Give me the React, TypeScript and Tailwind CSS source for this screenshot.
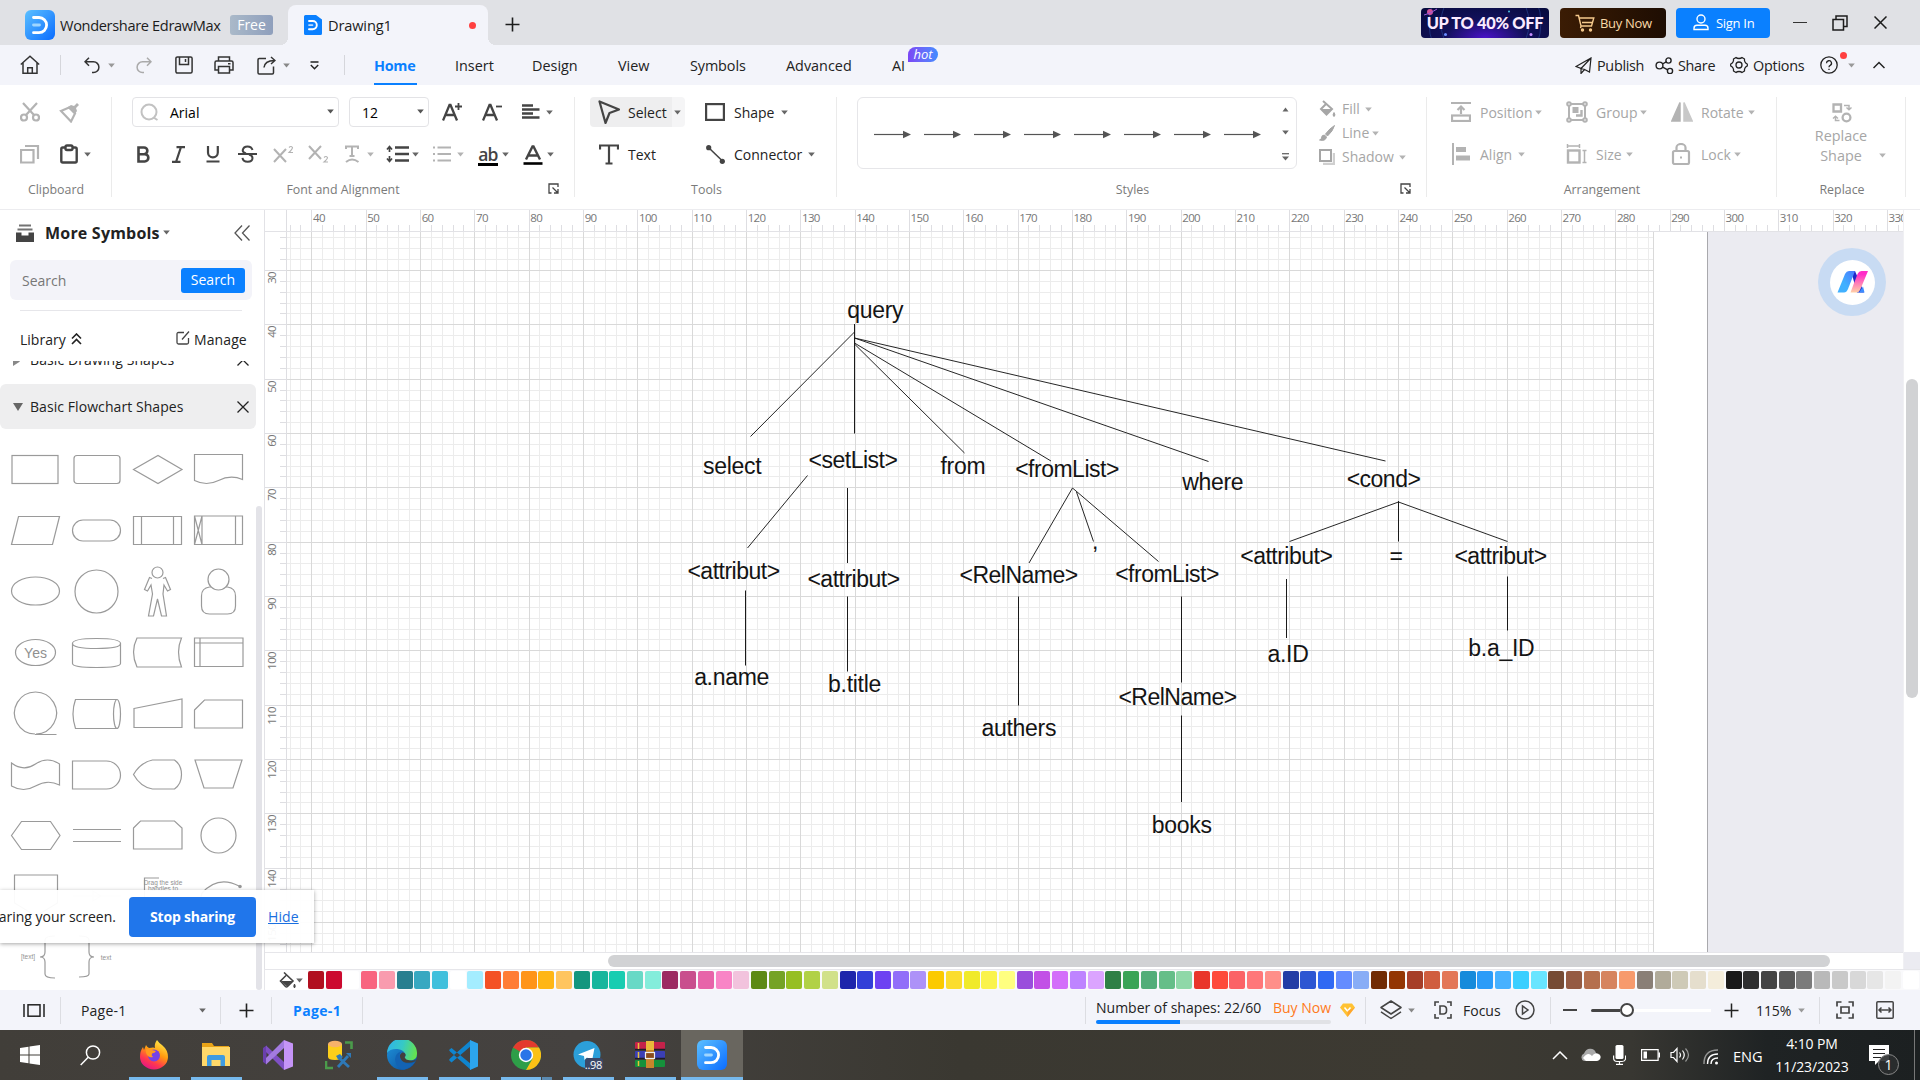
import React from "react";

type P = { children?: React.ReactNode; className?: string };
type IconProps = P & { w?: number; h?: number; sw?: number };

function Svg({ w = 20, h = 20, className = "", children, sw = 1.5 }: IconProps) {
  return (
    <svg
      width={w}
      height={h}
      viewBox={`0 0 ${w} ${h}`}
      fill="none"
      stroke="currentColor"
      strokeWidth={sw}
      className={`block shrink-0 ${className}`}
    >
      {children}
    </svg>
  );
}

function Caret({ className = "text-[#666]" }: { className?: string }) {
  return (
    <svg width="7" height="5" viewBox="0 0 7 5" className={`block shrink-0 ${className}`}>
      <path d="M0.2 0.5h6.6L3.5 4.6z" fill="currentColor" />
    </svg>
  );
}

function Cell({ className = "", children }: P) {
  return <div className={`flex h-full shrink-0 items-center whitespace-nowrap ${className}`}>{children}</div>;
}

function EdrawLogo({ size = 30, id }: { size?: number; id: string }) {
  return (
    <svg width={size} height={size} viewBox="0 0 30 30" className="block shrink-0">
      <defs>
        <linearGradient id={id} x1="0" y1="0" x2="1" y2="1">
          <stop offset="0" stopColor="#5cc0ff" />
          <stop offset="1" stopColor="#0a6cff" />
        </linearGradient>
      </defs>
      <rect width="30" height="30" rx="6" fill={`url(#${id})`} />
      <path d="M8.5 7.5H14a7.6 7.6 0 0 1 0 15.2H8.5" fill="none" stroke="#fff" strokeWidth="2.8" strokeLinecap="round" strokeLinejoin="round" />
      <path d="M8.5 15h6" stroke="#9fd6ff" strokeWidth="2.8" strokeLinecap="round" />
    </svg>
  );
}

function TitleBar() {
  return (
    <div className="flex h-[45px] bg-[#e0e1e5] text-[14px] text-[#1c1c1c]">
      <Cell className="w-[60px] pt-[5px] pl-[25px]">
        <EdrawLogo id="lg1" />
      </Cell>
      <Cell className="w-[170px] pt-[6px] text-[14.6px] tracking-[-0.35px]">Wondershare EdrawMax</Cell>
      <Cell className="w-[58px] pt-[5px]">
        <div className="flex h-5 w-[43px] items-center justify-center rounded-[3px] bg-gradient-to-r from-[#aab9c9] to-[#8f9fbc] text-[14px] text-white">Free</div>
      </Cell>
      <div className="relative mt-[5px] flex h-10 w-[200px] rounded-t-lg bg-[#f3f4fa]">
        <div className="absolute bottom-0 -left-2 h-2 w-2 bg-[radial-gradient(circle_at_0_0,transparent_8px,#f3f4fa_8px)]" />
        <div className="absolute -right-2 bottom-0 h-2 w-2 bg-[radial-gradient(circle_at_100%_0,transparent_8px,#f3f4fa_8px)]" />
        <Cell className="w-10 pl-4">
          <svg width="18" height="20" viewBox="0 0 18 20">
            <path d="M1.5 0H12l6 4.5V18.5a1.5 1.5 0 0 1-1.5 1.5h-15A1.5 1.5 0 0 1 0 18.5v-17A1.5 1.5 0 0 1 1.5 0z" fill="#0a80ff" />
            <path d="M5 6h3.7a4 4 0 0 1 0 8.2H5" fill="none" stroke="#fff" strokeWidth="1.9" strokeLinecap="round" />
            <path d="M5 10.1h3.5" stroke="#bcdcff" strokeWidth="1.7" strokeLinecap="round" />
          </svg>
        </Cell>
        <Cell className="w-[141px] pt-px text-[14.6px] tracking-[-0.15px]">Drawing1</Cell>
        <Cell>
          <div className="h-[7px] w-[7px] rounded-full bg-[#ff4040]" />
        </Cell>
      </div>
      <Cell className="w-[933px] pt-1 pl-[17px]">
        <Svg w={15} h={15} sw={1.6}>
          <path d="M7.5 0.5v14M0.5 7.5h14" />
        </Svg>
      </Cell>
      <Cell className="w-[139px]">
        <div className="relative flex h-[30px] w-[128px] items-center justify-center overflow-hidden rounded bg-[radial-gradient(ellipse_at_50%_100%,#4a12c8_0%,#12105a_45%,#060a3c_100%)] font-['Lato'] text-[16.4px] font-black tracking-[-0.3px] text-[#fbeaff]">
          <svg width="128" height="30" viewBox="0 0 128 30" className="absolute inset-0" fill="none" stroke="#2a4a9a" strokeWidth="0.6">
            <circle cx="64" cy="15" r="44" />
            <circle cx="64" cy="15" r="56" />
            <circle cx="9" cy="4" r="3" fill="#d0529a" stroke="none" />
            <path d="M3 7q6-1 13-6" stroke="#9a5bd8" strokeWidth="1" />
            <circle cx="24.5" cy="26.5" r="1.5" fill="#6a8cff" stroke="none" />
            <circle cx="110" cy="26.5" r="1.5" fill="#c58cff" stroke="none" />
            <circle cx="88" cy="3.5" r="1" fill="#4ac0e0" stroke="none" />
          </svg>
          <span className="relative pt-0.5">UP TO 40% OFF</span>
        </div>
      </Cell>
      <Cell className="w-[116px]">
        <div className="flex h-[30px] w-[106px] items-center rounded bg-gradient-to-r from-[#3b1c04] to-[#1e0d02] pl-[15px] text-[13px] text-[#f9d9a8]">
          <Svg w={20} h={18} sw={1.4} className="text-[#f5c98c]">
            <path d="M0.5 1.5h3l2.5 10.5h10.5l2.3-8H4.5M6 12l-0.5 2.2M7 8.5h10.5" />
            <circle cx="7.5" cy="16" r="1" fill="currentColor" />
            <circle cx="15.5" cy="16" r="1" fill="currentColor" />
          </Svg>
          <span className="ml-[5px] pt-0.5 tracking-[-0.3px]">Buy Now</span>
        </div>
      </Cell>
      <Cell className="w-[118px]">
        <div className="flex h-[30px] w-[94px] items-center rounded bg-[#0a80ff] pl-[17px] text-[13px] text-white">
          <Svg w={16} h={17} sw={1.4}>
            <circle cx="8" cy="5" r="4" />
            <path d="M1 15.5v-1.3q0-3 3-3h8q3 0 3 3v1.3z" />
          </Svg>
          <span className="ml-[7px] pt-0.5 tracking-[-0.3px]">Sign In</span>
        </div>
      </Cell>
      <Cell className="w-[38px]">
        <div className="-ml-px h-[1.5px] w-[14px] bg-[#333]" />
      </Cell>
      <Cell className="w-[42px]">
        <Svg w={16} h={16} sw={1.5}>
          <path d="M1 4.5h10.5V15H1zM4 4.5V1h11v10.5h-3.5" />
        </Svg>
      </Cell>
      <Cell>
        <Svg w={13} h={13} sw={1.5} className="-ml-[0.5px]">
          <path d="M0.5 0.5l12 12M12.5 0.5l-12 12" />
        </Svg>
      </Cell>
    </div>
  );
}

function MenuBar() {
  return (
    <div className="flex h-10 bg-[#f3f4fa] text-[14.4px] text-[#222]">
      <Cell className="w-[60px] pl-5 text-[#333]">
        <Svg w={20} h={20} sw={1.5}>
          <path d="M0.8 9.5L10 1.2l9.2 8.3M3 8v10.3h14V8M7.7 18v-5.2h4.6V18" />
        </Svg>
      </Cell>
      <Cell className="w-6">
        <div className="h-5 w-px bg-[#d5d6db]" />
      </Cell>
      <Cell className="w-6 text-[#333]">
        <Svg w={16} h={17} sw={1.5}>
          <path d="M5 0.8L1 4.8l4 4M1 4.8h8.500a5.3 5.3 0 0 1 0 10.800H8" />
        </Svg>
      </Cell>
      <Cell className="w-7">
        <Caret className="text-[#999]" />
      </Cell>
      <Cell className="w-[39px] text-[#aaa]">
        <Svg w={16} h={17} sw={1.5}>
          <path d="M11 0.8l4 4-4 4M15 4.8H6.500a5.3 5.3 0 0 0 0 10.800H8" />
        </Svg>
      </Cell>
      <Cell className="w-[39px] text-[#333]">
        <Svg w={18} h={18} sw={1.5}>
          <rect x="0.9" y="0.9" width="16.2" height="16.2" rx="1.5" />
          <path d="M4.5 1v7.5h9V1M10.5 3v3" />
        </Svg>
      </Cell>
      <Cell className="w-[43px] text-[#333]">
        <Svg w={20} h={18} sw={1.5}>
          <path d="M4.5 5V1h11v4M4.5 14H1V6.5Q1 5 2.5 5h15Q19 5 19 6.5V14h-3.5" />
          <path d="M4.5 10.5h11V17h-11zM14 7.7h2.5" />
        </Svg>
      </Cell>
      <Cell className="w-[26px] text-[#333]">
        <Svg w={19} h={19} sw={1.5}>
          <path d="M9 2.5H2.2Q1 2.5 1 3.7v13.1Q1 18 2.2 18h13.1q1.2 0 1.2-1.2V10.5M7 11.5Q7.5 4.8 17.5 4.5M14 1l4 3.5-4 3.5" />
        </Svg>
      </Cell>
      <Cell className="w-[27px]">
        <Caret className="text-[#888]" />
      </Cell>
      <Cell className="w-[34px]">
        <Svg w={9} h={9} sw={1.4}>
          <path d="M0.5 1h8M0.8 4l3.7 3.7L8.2 4" />
        </Svg>
      </Cell>
      <Cell className="w-[30px]">
        <div className="h-5 w-px bg-[#d5d6db]" />
      </Cell>
      <Cell className="w-[81px]">
        <div className="flex h-full w-[43px] items-center border-b-[2px] border-[#0a80ff] pt-[3px] font-bold tracking-[-0.3px] text-[#0a80ff]">Home</div>
      </Cell>
      <Cell className="w-[77px] pt-px">Insert</Cell>
      <Cell className="w-[86px] pt-px">Design</Cell>
      <Cell className="w-[72px] pt-px">View</Cell>
      <Cell className="w-[96px] pt-px tracking-[-0.1px]">Symbols</Cell>
      <Cell className="w-[106px] pt-px">Advanced</Cell>
      <Cell className="w-4 pt-px">AI</Cell>
      <div className="mt-[2px] flex h-[15px] w-[30px] items-center justify-center rounded-lg rounded-bl-none bg-gradient-to-r from-[#7a45f5] to-[#3f8cff] pb-px text-[13px] text-white italic">hot</div>
      <Cell className="ml-[637px] w-[22px]">
        <Svg w={17} h={17} sw={1.2}>
          <path d="M1 9.5L16 1l-1.5 14-5-2.5-3.5 4v-5zM16 1L6 11.5l3.5 1" />
        </Svg>
      </Cell>
      <Cell className="w-[58px] pt-px tracking-[-0.3px]">Publish</Cell>
      <Cell className="w-[23px]">
        <Svg w={19} h={17} sw={1.4}>
          <circle cx="4.5" cy="8.5" r="3.4" />
          <circle cx="13.5" cy="3.5" r="2.6" />
          <circle cx="15" cy="14" r="2.6" />
          <path d="M7.5 7l3.7-2.2M7.7 10.2l5 2.6" />
        </Svg>
      </Cell>
      <Cell className="w-[52px] pt-px tracking-[-0.3px]">Share</Cell>
      <Cell className="w-[23px]">
        <Svg w={18} h={18} sw={1.3}>
          <path d="M6 1.5q1 1 3 1t3-1l2.5 1.5q-0.3 1.5 0.5 3t2.3 2v2q-1.5 0.5-2.3 2t-0.5 3L12 16.5q-1-1-3-1t-3 1L3.5 15q0.3-1.5-0.5-3t-2.3-2V8Q2.2 7.5 3 6t0.5-3z" strokeLinejoin="round" />
          <circle cx="9" cy="9" r="3" />
        </Svg>
      </Cell>
      <Cell className="w-[67px] pt-px tracking-[-0.25px]">Options</Cell>
      <Cell className="relative w-7">
        <Svg w={18} h={18} sw={1.3}>
          <circle cx="9" cy="9" r="8.2" />
          <path d="M6.5 7.2a2.5 2.5 0 1 1 3.7 2.2Q9 10 9 11.2M9 12.7v1.3" />
        </Svg>
        <div className="absolute top-[7px] left-[20px] h-[7px] w-[7px] rounded-full bg-[#ff4040]" />
      </Cell>
      <Cell className="w-[25px]">
        <Caret className="text-[#999]" />
      </Cell>
      <Cell>
        <Svg w={12} h={8} sw={1.5}>
          <path d="M0.5 7L6 1.5 11.5 7" />
        </Svg>
      </Cell>
    </div>
  );
}

function Launcher({ className = "" }: { className?: string }) {
  return (
    <Svg w={11} h={11} sw={1.3} className={`text-[#444] ${className}`}>
      <path d="M3.5 10H1V1h9v3M4.5 4.5l5 5M10 6v4H6" />
    </Svg>
  );
}

function GroupLabel({ children, className = "" }: P) {
  return <div className={`flex h-[28px] items-start justify-center pt-[13px] text-[12.4px] leading-[16px] whitespace-nowrap text-[#7a7a7a] ${className}`}>{children}</div>;
}

function Group({ children, className = "" }: P) {
  return <div className={`h-[100px] shrink-0 border-r border-[#ebebeb] ${className}`}>{children}</div>;
}

const row = "flex h-[30px] items-center";

function Ribbon() {
  return (
    <div className="flex h-[125px] border-b border-[#ececef] bg-white pt-3 text-[14px] text-[#222]">
      <Group className="w-[112px]">
        <div className={`${row} pl-5`}>
          <Cell className="w-[39px] text-[#b3b3b3]">
            <Svg w={20} h={20} sw={2.2}>
              <circle cx="4" cy="15.5" r="3" />
              <circle cx="16" cy="15.5" r="3" />
              <path d="M3 1l11 12M17 1L6 13" />
            </Svg>
          </Cell>
          <Svg w={21} h={21} sw={2.2} className="text-[#b3b3b3]">
            <path d="M2 9l8-3.5 6 6-4 8z" />
            <path d="M9 5l3-2 3 1 3-3 2 2-3 3 1 3-2 3z" fill="currentColor" stroke="none" />
          </Svg>
        </div>
        <div className={`${row} mt-3 pl-5`}>
          <Cell className="w-10 text-[#b3b3b3]">
            <Svg w={20} h={20} sw={2.2}>
              <path d="M1 6h12.5v12.5H1zM5 2h13v13" />
            </Svg>
          </Cell>
          <Cell className="w-6 text-[#444]">
            <Svg w={18} h={20} sw={2.4}>
              <rect x="1.3" y="3.5" width="15.4" height="15" rx="1.5" />
              <rect x="5.5" y="1.5" width="7" height="4.5" rx="1.5" fill="#fff" />
            </Svg>
          </Cell>
          <Caret />
        </div>
        <GroupLabel>
          <span className="ml-px">Clipboard</span>
        </GroupLabel>
      </Group>

      <Group className="w-[463px]">
        <div className={`${row} pl-5`}>
          <div className="flex h-[30px] w-[207px] items-center rounded border border-[#e3e3e6] pl-[7px]">
            <Svg w={19} h={19} sw={2} className="text-[#c2c2c2]">
              <circle cx="9" cy="9" r="7.5" />
              <path d="M13.5 14.5l4 2.5" />
            </Svg>
            <span className="ml-[11px] w-[157px] pt-px text-black">Arial</span>
            <Caret className="mb-0.5 text-[#555]" />
          </div>
          <div className="ml-[10px] flex h-[30px] w-20 items-center rounded border border-[#e3e3e6] pl-[12px]">
            <span className="w-[55px] pt-px text-black">12</span>
            <Caret className="mb-0.5 text-[#555]" />
          </div>
          <Cell className="ml-[13px] w-10 text-[#444]">
            <Svg w={20} h={20} sw={2.3}>
              <path d="M1 18.5L7.5 3h1L15 18.5M3.5 13h9" />
              <path d="M13 4.5h7M16.5 1v7" strokeWidth="1.8" />
            </Svg>
          </Cell>
          <Cell className="w-10 text-[#444]">
            <Svg w={20} h={20} sw={2.3}>
              <path d="M1 18.5L7.5 3h1L15 18.5M3.5 13h9" />
              <path d="M14 4.5h6" strokeWidth="1.8" />
            </Svg>
          </Cell>
          <Cell className="w-6 pb-0.5 text-[#444]">
            <Svg w={18} h={15} sw={2.4}>
              <path d="M0 1.5h11M0 5.5h17.5M0 9.5h11M0 13.5h17.5" />
            </Svg>
          </Cell>
          <Caret />
        </div>
        <div className={`${row} mt-3 pl-[25px]`}>
          <Cell className="w-[35px] text-[#444]">
            <Svg w={13} h={17} sw={2.6}>
              <path d="M1.5 1.5h5.5a3.3 3.3 0 0 1 0 6.7H1.5zM1.5 8.2h6.2a3.6 3.6 0 0 1 0 7.3H1.5z" />
            </Svg>
          </Cell>
          <Cell className="w-[34px] text-[#444]">
            <Svg w={13} h={17} sw={2.2}>
              <path d="M4.5 1.2H13M0 15.8h8.5M9 1L4 16" />
            </Svg>
          </Cell>
          <Cell className="w-8 text-[#444]">
            <Svg w={14} h={18} sw={2.2}>
              <path d="M2 1v6.5a4.8 4.8 0 0 0 9.8 0V1M0.5 16.5h13" />
            </Svg>
          </Cell>
          <Cell className="w-[35px] text-[#444]">
            <Svg w={19} h={18} sw={2}>
              <path d="M14.5 5Q13.5 1.5 9.5 1.5T4.7 5.2Q4.7 7.5 8 8.5M0 9h19M11 9.5q3.5 1 3.5 3.5 0 3.7-4.8 3.7T4.5 12.8" />
            </Svg>
          </Cell>
          <Cell className="w-[35px] text-[#b3b3b3]">
            <Svg w={21} h={18} sw={2}>
              <path d="M1 4l12 13M13 4L1 17" />
              <path d="M16 2.5q2-2 3.5 0 0 1.5-3.5 5H20" strokeWidth="1.1" />
            </Svg>
          </Cell>
          <Cell className="w-[37px] text-[#b3b3b3]">
            <Svg w={21} h={18} sw={2}>
              <path d="M1 1l12 13M13 1L1 14" />
              <path d="M16 12.5q2-2 3.5 0 0 1.5-3.5 4.5H20" strokeWidth="1.1" />
            </Svg>
          </Cell>
          <Cell className="w-[22px] text-[#b3b3b3]">
            <Svg w={15} h={18} sw={2}>
              <path d="M1 4V1.5h12V4M7 1.5V11M4.5 11h5M1 17q6-5 12.5 0" />
            </Svg>
          </Cell>
          <Cell className="w-[19px]">
            <Caret className="text-[#b3b3b3]" />
          </Cell>
          <Cell className="w-[26px] text-[#444]">
            <Svg w={23} h={18} sw={2.4}>
              <path d="M9 2.5h14M9 9h14M9 15.5h14" />
              <path d="M3.5 2v5M1 4.5l2.5-3 2.5 3M3.5 11v5M1 13.5l2.5 3 2.5-3" strokeWidth="1.7" />
            </Svg>
          </Cell>
          <Cell className="w-[21px]">
            <Caret />
          </Cell>
          <Cell className="w-6 text-[#b3b3b3]">
            <Svg w={18} h={16} sw={2}>
              <path d="M4.5 1.5H18M4.5 8H18M4.5 14.5H18M0 1.5h2M0 8h2M0 14.5h2" />
            </Svg>
          </Cell>
          <Cell className="w-[21px]">
            <Caret className="text-[#b3b3b3]" />
          </Cell>
          <Cell className="w-6">
            <div className="mt-1.5 h-[18px] w-5 border-b-[3px] border-black text-center text-[17.5px] leading-[13px] font-semibold tracking-[-0.8px] text-[#444]">ab</div>
          </Cell>
          <Cell className="w-[21px]">
            <Caret />
          </Cell>
          <Cell className="w-6 text-[#444]">
            <Svg w={20} h={20} sw={2.4} className="mt-0.5">
              <path d="M3 14.5L9.5 1.5h1L17 14.5M5.5 10.5h9" />
              <path d="M0.5 18.5h19" stroke="#000" strokeWidth="2.6" />
            </Svg>
          </Cell>
          <Caret />
        </div>
        <GroupLabel className="relative">
          <span>Font and Alignment</span>
          <Launcher className="absolute top-[14px] right-[15px]" />
        </GroupLabel>
      </Group>

      <Group className="w-[262px]">
        <div className={row}>
          <div className="ml-[15px] flex h-[30px] w-[95px] items-center rounded bg-[linear-gradient(90deg,#eeeeef_82px,#f5f5f6_82px)] pl-2">
            <Cell className="w-[30px] text-[#444]">
              <Svg w={22} h={24} sw={2.2}>
                <path d="M1.5 1.5l6 21.5 4-10 9.5-3.5z" strokeLinejoin="round" />
              </Svg>
            </Cell>
            <span className="w-[46px] pt-0.5">Select</span>
            <Caret />
          </div>
          <Cell className="ml-5 w-[29px] text-[#444]">
            <Svg w={20} h={18} sw={2.2}>
              <rect x="1.1" y="1.1" width="17.8" height="15.8" />
            </Svg>
          </Cell>
          <Cell className="w-[47px] pt-0.5">Shape</Cell>
          <Caret />
        </div>
        <div className={`${row} mt-3 pl-6`}>
          <Cell className="w-[29px] text-[#444]">
            <Svg w={20} h={21} sw={2.2}>
              <path d="M1 5.5V1.5h18v4M10 1.5V19.5M6.5 19.5h7" />
            </Svg>
          </Cell>
          <Cell className="w-[78px] pt-0.5">Text</Cell>
          <Cell className="w-[28px] text-[#444]">
            <Svg w={19} h={19} sw={2}>
              <path d="M3 3l13.5 13" strokeWidth="1.6" />
              <circle cx="2.7" cy="2.7" r="2.6" fill="currentColor" stroke="none" />
              <circle cx="16.3" cy="16.3" r="2.6" fill="currentColor" stroke="none" />
            </Svg>
          </Cell>
          <Cell className="w-[74px] pt-0.5">Connector</Cell>
          <Caret />
        </div>
        <GroupLabel>
          <span className="ml-0.5">Tools</span>
        </GroupLabel>
      </Group>

      <Group className="w-[590px]">
        <div className="flex h-[72px]">
          <div className="ml-5 flex h-[72px] w-[440px] items-center gap-[13px] rounded-md border border-[#e6e6e9] pl-4">
            {Array.from({ length: 8 }, (_, i) => (
              <svg key={i} width="37" height="9" viewBox="0 0 37 9" className="mt-[3px] shrink-0">
                <path d="M0 4.5h30" stroke="#555" strokeWidth="1.2" />
                <path d="M29 0.8L37 4.5 29 8.2z" fill="#555" />
              </svg>
            ))}
            <div className="flex h-full flex-col items-center justify-between pt-[9px] pb-[7px] pl-2 text-[#666]">
              <svg width="7" height="5" viewBox="0 0 7 5">
                <path d="M0.5 4.5h6L3.5 0.5z" fill="currentColor" />
              </svg>
              <Caret />
              <svg width="7" height="8" viewBox="0 0 7 8">
                <path d="M0 0.7h7" stroke="currentColor" strokeWidth="1.3" />
                <path d="M0 3.5h7L3.5 7.5z" fill="currentColor" />
              </svg>
            </div>
          </div>
          <div className="ml-[22px] flex flex-col text-[#a6a6a6]">
            <div className="flex h-6 items-center">
              <Cell className="w-[23px]">
                <Svg w={17} h={18} sw={2}>
                  <path d="M4 1l9 8-5.5 5.5L2 9l5-5" />
                  <path d="M2 9h11l-5.5 5.5z" fill="currentColor" stroke="none" />
                  <path d="M15 12.5q2 3 0 4-2-1 0-4" fill="currentColor" strokeWidth="1" />
                </Svg>
              </Cell>
              <Cell className="w-[23px]">Fill</Cell>
              <Caret className="text-[#b3b3b3]" />
            </div>
            <div className="flex h-6 items-center">
              <Cell className="w-[23px]">
                <Svg w={16} h={16} sw={1}>
                  <path d="M15.5 0.5Q11 3 6.5 9l2 2Q14 6 15.5 0.5zM5.5 10q-3 0-3 3 0 1.5-2 2 6 1.5 7-3z" fill="currentColor" />
                </Svg>
              </Cell>
              <Cell className="w-[30px]">Line</Cell>
              <Caret className="text-[#b3b3b3]" />
            </div>
            <div className="flex h-6 items-center">
              <Cell className="w-[23px]">
                <Svg w={16} h={16} sw={2}>
                  <path d="M4 15h11V4" strokeWidth="2.4" stroke="#cfcfcf" />
                  <rect x="1" y="1" width="11" height="11" fill="#fff" />
                </Svg>
              </Cell>
              <Cell className="w-[57px]">Shadow</Cell>
              <Caret className="text-[#b3b3b3]" />
            </div>
          </div>
        </div>
        <GroupLabel className="relative">
          <span className="ml-0.5">Styles</span>
          <Launcher className="absolute top-[14px] right-[15px]" />
        </GroupLabel>
      </Group>

      <Group className="w-[350px] text-[#a6a6a6]">
        <div className={`${row} pl-6`}>
          <Cell className="w-[29px] text-[#b3b3b3]">
            <Svg w={20} h={20} sw={2.2}>
              <path d="M0 1h20M10 12V5M6.5 8L10 4.5 13.5 8" />
              <rect x="1" y="13.5" width="18" height="5.5" />
            </Svg>
          </Cell>
          <Cell className="w-[55px] pt-0.5">Position</Cell>
          <Cell className="w-[31px]"><Caret className="text-[#b3b3b3]" /></Cell>
          <Cell className="w-[30px] text-[#b3b3b3]">
            <Svg w={22} h={22} sw={2}>
              <path d="M5 3h12M5 19h12M3 5v12M19 5v12" />
              <circle cx="3" cy="3" r="1.8" />
              <circle cx="19" cy="3" r="1.8" />
              <circle cx="3" cy="19" r="1.8" />
              <circle cx="19" cy="19" r="1.8" />
              <path d="M6.5 6h6v6h-6z" fill="currentColor" stroke="none" />
              <path d="M10 14.5h5.5V9" strokeWidth="2.4" />
            </Svg>
          </Cell>
          <Cell className="w-11 pt-0.5">Group</Cell>
          <Cell className="w-[31px]"><Caret className="text-[#b3b3b3]" /></Cell>
          <Cell className="w-[30px] text-[#b3b3b3]">
            <Svg w={22} h={20} sw={1.5}>
              <path d="M9 0.5V19H0.8z" fill="currentColor" />
              <path d="M13 0.5V19h8.2z" fill="#c8c8c8" stroke="#c8c8c8" />
            </Svg>
          </Cell>
          <Cell className="w-[47px] pt-0.5">Rotate</Cell>
          <Caret className="text-[#b3b3b3]" />
        </div>
        <div className={`${row} mt-3 pl-6`}>
          <Cell className="w-[29px] text-[#b3b3b3]">
            <Svg w={20} h={22} sw={2}>
              <path d="M2 0v22" />
              <path d="M5 4h10v5H5zM5 12.5h14v5H5z" fill="currentColor" stroke="none" />
            </Svg>
          </Cell>
          <Cell className="w-[38px] pt-0.5">Align</Cell>
          <Cell className="w-12"><Caret className="text-[#b3b3b3]" /></Cell>
          <Cell className="w-[30px] text-[#b3b3b3]">
            <Svg w={21} h={20} sw={2.4}>
              <rect x="2" y="6.5" width="11.5" height="12" />
              <path d="M1 2h13M1.5 0v4M13.5 0v4M18.5 6v13M16.5 6.5h4M16.5 18.5h4" strokeWidth="1.5" />
            </Svg>
          </Cell>
          <Cell className="w-[30px] pt-0.5">Size</Cell>
          <Cell className="w-[45px]"><Caret className="text-[#b3b3b3]" /></Cell>
          <Cell className="w-[30px] text-[#b3b3b3]">
            <Svg w={20} h={22} sw={2.2}>
              <rect x="2" y="8" width="16" height="13" rx="1.5" />
              <path d="M5.5 8V4.5a4.5 3.5 0 0 1 9 0V8M9 14.5h2" />
            </Svg>
          </Cell>
          <Cell className="w-[33px] pt-0.5">Lock</Cell>
          <Caret className="text-[#b3b3b3]" />
        </div>
        <GroupLabel>
          <span className="ml-px">Arrangement</span>
        </GroupLabel>
      </Group>

      <Group className="w-[129px] text-[#a6a6a6]">
        <div className="flex h-[72px] flex-col items-center pt-[6px]">
          <Svg w={20} h={20} sw={2.3} className="ml-0.5 text-[#b3b3b3]">
            <path d="M1.5 1.5h7.5v7h-7.5z" />
            <circle cx="14.5" cy="14.5" r="3.9" />
            <path d="M12 2.5h5V6M14.5 4.5l2.5 2.2 2.5-2.2M7.5 17.5H3.5V14M1 15.5l2.500-2.2 2.5 2.2" strokeWidth="1.5" />
          </Svg>
          <div className="mt-[3px] text-[14.4px] leading-5">Replace</div>
          <div className="relative text-[14.4px] leading-5">
            Shape
            <div className="absolute top-[7px] left-[59px]">
              <Caret className="text-[#b3b3b3]" />
            </div>
          </div>
        </div>
        <GroupLabel>
          <span className="ml-0.5">Replace</span>
        </GroupLabel>
      </Group>
    </div>
  );
}

const tiny = { textAnchor: "middle", fontSize: 6.5, fill: "#909090", stroke: "none", fontFamily: "Liberation Sans" } as const;

const shapes: React.ReactNode[] = [
  <rect x="7" y="16.5" width="46" height="28" />,
  <rect x="8" y="16.5" width="46" height="28" rx="3" />,
  <path d="M6.5 30.5L31 16.5l24 14-24 14z" />,
  <path d="M6.5 15.5h48v25q-12-5-24 1t-24 0z" />,
  <path d="M13.5 16.5h41l-7 28h-41z" />,
  <rect x="6.5" y="20" width="48" height="21" rx="10.5" />,
  <path d="M6.5 16.5h48v28h-48zM14.5 16.5v28M46.5 16.5v28" />,
  <path d="M6.5 16h48v28.5h-48zM14 16v28.5M47.5 16v28.5M6.5 16L14 44.5M14 16L6.5 44.5" />,
  <ellipse cx="30.5" cy="30" rx="24" ry="14" />,
  <circle cx="30.5" cy="30.5" r="21.5" />,
  <>
    <circle cx="30.5" cy="11.5" r="5.5" />
    <path d="M25 17.5l-2.5-1-5 12 3 1.5 3.5-6 1.5 9-4 22h5l4-17 4 17h5l-3.5-22 1-9 3.5 6 3-1.5-5-12-2.5 1" />
  </>,
  <>
    <circle cx="30.5" cy="18.5" r="10.5" />
    <path d="M23.5 26h-2q-8 1-8 9v10q0 8 8 8h18q8 0 8-8V35q0-8-8-9h-2" />
  </>,
  <>
    <ellipse cx="30.5" cy="30.5" rx="20" ry="13" />
    <text x="30.5" y="35.5" textAnchor="middle" fontSize="14" fill="#909090" stroke="none" fontFamily="Liberation Sans">
      Yes
    </text>
  </>,
  <path d="M6.5 21v20.5q0 4 24 4t24-4V21M6.5 21.5q0-5 24-5t24 5-24 5-24-5z" />,
  <path d="M10 16h44.5q-6 14 0 29H10q-7-15 0-29z" />,
  <path d="M6.5 16h48.5v28.5H6.5zM6.5 21H55M12 16v28.5" />,
  <path d="M30 51a21 21 0 1 1 1 0M30 51.5h21.5" />,
  <>
    <path d="M51 16.5H9.5q-5 14 0 29H51" />
    <ellipse cx="51" cy="31" rx="3.5" ry="14.5" />
  </>,
  <path d="M7 25.5l48-9.5v28.5H7z" />,
  <path d="M6.5 27l10-10h38v28h-48z" />,
  <path d="M6.5 19q12 9 24 1t24 0v21q-12-6-24 1t-24 0z" />,
  <path d="M6.5 17h34a14 14 0 0 1 0 28h-34z" />,
  <path d="M6.5 30.5q7-12 19-14.5h22q7 5 7 14.5t-7 14.5h-22q-12-2-19-14.5z" />,
  <path d="M7 16h47l-9 28H16z" />,
  <path d="M6.5 30.5l10-14h29l9.5 14-9.5 14h-29z" />,
  <path d="M7 24.5h48M7 36.5h48" />,
  <path d="M6.5 23l7-7h34l7.5 7v21h-48.5z" />,
  <circle cx="30.5" cy="30.5" r="17.5" />,
  <path d="M9.5 9h43v28L31 50 9.5 37z" />,
  <path d="M7 30h48M27 25v10l8-5z" opacity="0.4" />,
  <>
    <path d="M32 12H17.5v40" />
    <text x="36" y="19" {...tiny}>
      Drag the side
    </text>
    <text x="36" y="25" {...tiny}>
      handles to
    </text>
  </>,
  <>
    <path d="M14 27q16-18 37-7M10 50q1-14 4-23" />
    <circle cx="52" cy="20.5" r="1.2" fill="#909090" />
  </>,
  <>
    <path d="M50 9q-10 0-10 4v12q0 5-5 5 5 0 5 5v12q0 4 10 4" />
    <text x="23" y="32" {...tiny}>
      [text]
    </text>
  </>,
  <>
    <path d="M13 9q10 0 10 4v12q0 5 5 5-5 0-5 5v12q0 3-10 3" />
    <text x="40" y="33" {...tiny}>
      text
    </text>
  </>,
];

function SymbolsPanel() {
  return (
    <div className="flex h-[780px] w-[264px] shrink-0 flex-col bg-white text-[14px] text-[#222]">
      <div className="flex h-[50px] shrink-0 items-center pb-1">
        <Cell className="w-[45px] pl-4 text-[#444]">
          <svg width="18" height="19" viewBox="0 0 18 19" fill="currentColor">
            <path d="M3 0.5h12v2H3zM1.5 4.5h15v2h-15z" opacity="0.75" />
            <path d="M0 8.5h5.5v3h7v-3H18v9.5H0z" />
          </svg>
        </Cell>
        <Cell className="w-[118px] text-[16px] font-bold tracking-[0.2px] text-[#222]">More Symbols</Cell>
        <Cell className="w-[71px] pb-0.5">
          <Caret />
        </Cell>
        <Svg w={17} h={16} sw={1.3} className="text-[#555]">
          <path d="M8 0.5L1 8l7 7.5M15.5 0.5L8.5 8l7 7.5" />
        </Svg>
      </div>
      <div className="ml-[10px] flex h-10 w-[242px] shrink-0 items-center justify-between rounded-md bg-[#f3f3f9] pr-[7px] pl-3">
        <span className="pt-px text-[#777]">Search</span>
        <div className="flex h-[25px] w-16 items-center justify-center rounded-[3px] bg-[#0a80ff] text-white">Search</div>
      </div>
      <div className="mt-[10px] ml-5 h-px w-[222px] shrink-0 bg-[#e6e6ea]" />
      <div className="flex h-[50px] shrink-0 items-center pt-[8px]">
        <Cell className="w-[52px] pl-5">Library</Cell>
        <Cell className="ml-[19px] w-[105px] pb-0.5">
          <Svg w={11} h={12} sw={1.6}>
            <path d="M1 5.5l4.5-4.5L10 5.5M1 11l4.5-4.5L10 11" />
          </Svg>
        </Cell>
        <Cell className="w-[18px] pb-1 text-[#444]">
          <Svg w={14} h={14} sw={1.3}>
            <path d="M8 1.5H2.5Q1 1.5 1 3v8.5Q1 13 2.5 13h8.5q1.5 0 1.5-1.5V7M6 8.5l7-8" />
          </Svg>
        </Cell>
        <span className="tracking-[0.1px]">Manage</span>
      </div>
      <div className="flex min-h-0 flex-1">
        <div className="w-[256px] overflow-hidden">
          <div className="-mt-[24px] flex h-[45px] items-center">
            <Cell className="w-[30px] pt-1 pl-[13px]">
              <svg width="7" height="9" viewBox="0 0 7 9">
                <path d="M0 0l7 4.5L0 9z" fill="#888" />
              </svg>
            </Cell>
            <Cell className="w-[207px] tracking-[0.1px]">Basic Drawing Shapes</Cell>
            <Svg w={12} h={12} sw={1.3}>
              <path d="M0.5 0.5l11 11M11.5 0.5l-11 11" />
            </Svg>
          </div>
          <div className="mt-[2px] flex h-[45px] w-[256px] items-center rounded-md bg-[#eeeeef]">
            <Cell className="w-[30px] pl-[13px]">
              <svg width="10" height="8" viewBox="0 0 10 8">
                <path d="M0 0h10L5 8z" fill="#666" />
              </svg>
            </Cell>
            <Cell className="w-[207px] tracking-[0.07px]">Basic Flowchart Shapes</Cell>
            <Svg w={12} h={12} sw={1.3}>
              <path d="M0.5 0.5l11 11M11.5 0.5l-11 11" />
            </Svg>
          </div>
          <div className="mt-[9.5px] ml-[5px] grid w-[244px] grid-cols-4">
            {shapes.map((s, i) => (
              <svg key={i} width="61" height="61" viewBox="0 0 61 61" fill="none" stroke="#9a9a9a" strokeWidth="1.2" className="block">
                {s}
              </svg>
            ))}
          </div>
        </div>
        <div className="mt-[145px] w-[6px] rounded-full bg-[#e3e3e8]" />
      </div>
    </div>
  );
}

const X0 = 287;
const Y0 = 232;
const STEP = 54.33;
const gx = (units: number) => 311.8 + ((units - 40) * STEP) / 10;
const gy = (units: number) => 270.5 + ((units - 30) * STEP) / 10;
const range = (from: number, to: number, step: number) => {
  const out: number[] = [];
  for (let v = from; v <= to; v += step) out.push(v);
  return out;
};
const vMinor = range(36, 286, 2);
const hMinor = range(24, 154, 2);

const edges = [
  [854.5, 324, 854.5, 433.5],
  [854.5, 332, 750.5, 436.5],
  [854.5, 344, 964.5, 453],
  [854.5, 343, 1051, 461],
  [854.5, 338, 1208.5, 461.5],
  [854.5, 338, 1385.5, 461],
  [807.5, 475.5, 747.5, 548],
  [847.5, 488, 847.5, 563],
  [745.5, 590.5, 745.5, 665.5],
  [847.5, 596.5, 847.5, 671.5],
  [1072.5, 488, 1029, 563],
  [1076.5, 492, 1093.5, 541.5],
  [1072.5, 488, 1158.5, 561.5],
  [1018.5, 596.5, 1018.5, 705.5],
  [1181.5, 596.5, 1181.5, 682.5],
  [1181.5, 715.5, 1181.5, 802],
  [1398.5, 502, 1289.5, 541.5],
  [1398.5, 501, 1398.5, 541.5],
  [1398.5, 502, 1507.5, 541.5],
  [1286.5, 579, 1286.5, 638],
  [1507.5, 576.5, 1507.5, 630.5],
];

const labels: [string, number, number][] = [
  ["query", 875.3, 319],
  ["select", 732.2, 475],
  ["<setList>", 853, 469],
  ["from", 962.9, 475],
  ["<fromList>", 1067, 478],
  ["where", 1212.8, 491],
  ["<cond>", 1383.5, 488],
  ["<attribut>", 733.5, 580],
  ["<attribut>", 853.5, 588],
  ["<RelName>", 1018.6, 584],
  [",", 1095, 550],
  ["<fromList>", 1167, 583],
  ["<attribut>", 1286.3, 565],
  ["=", 1396, 565],
  ["<attribut>", 1500.5, 565],
  ["a.name", 731.6, 686],
  ["b.title", 854.5, 693],
  ["a.ID", 1288, 663],
  ["b.a_ID", 1501.3, 657],
  ["authers", 1018.8, 737],
  ["<RelName>", 1177.5, 706],
  ["books", 1181.8, 834],
];

function Canvas() {
  return (
    <div className="flex w-[1639px] flex-col border-l border-[#e2e2e6]">
      <div className="relative flex h-[22px] overflow-hidden border-b border-[#e2e2e6] bg-white">
        <svg width="1639" height="22" viewBox="265 210 1639 22" className="absolute top-0 left-0" shapeRendering="crispEdges">
          <path d="M286.5 210v22" stroke="#dedee2" />
          {range(36, 332, 2).map((u) => (
            <path key={u} d={`M${Math.floor(gx(u)) + 0.5} ${u % 10 === 0 ? 210 : 225}V232`} stroke="#dedee2" />
          ))}
        </svg>
        <div className="relative ml-[48px] flex text-[11.5px] leading-4 tracking-[-0.65px] text-[#777]">
          {range(40, 330, 10).map((n) => (
            <div key={n} className="w-[54.33px] shrink-0">
              {n}
            </div>
          ))}
        </div>
      </div>
      <div className="flex h-[720px]">
        <div className="relative w-[22px] shrink-0 overflow-hidden bg-white">
          <svg width="22" height="720" viewBox="265 232 22 720" className="absolute inset-0" shapeRendering="crispEdges">
            <path d="M286.5 232v720" stroke="#dedee2" />
            {hMinor.map((u) => (
              <path key={u} d={`M${u % 10 === 0 ? 265 : 280} ${Math.floor(gy(u)) + 0.5}H287`} stroke="#dedee2" />
            ))}
          </svg>
          <div className="relative mt-[40px] flex flex-col text-[11.5px] leading-[14px] tracking-[-0.65px] text-[#777]">
            {range(30, 150, 10).map((n) => (
              <div key={n} className="h-[54.33px] shrink-0">
                <span className="block w-[14px] rotate-180 [writing-mode:vertical-rl]">{n}</span>
              </div>
            ))}
          </div>
        </div>
        <div className="relative flex-1 overflow-hidden bg-[#ebebf1]">
          <svg width="1617" height="720" viewBox={`${X0} ${Y0} 1617 720`} className="absolute top-0 left-0">
            <rect x="287" y="232" width="1421" height="720" fill="#fff" />
            <g shapeRendering="crispEdges">
              {vMinor.map((u) => (
                <path key={u} d={`M${Math.floor(gx(u)) + 0.5} 232V952`} stroke="#ececec" />
              ))}
              {hMinor.map((u) => (
                <path key={u} d={`M287 ${Math.floor(gy(u)) + 0.5}H1653`} stroke="#ececec" />
              ))}
              {vMinor
                .filter((u) => u % 10 === 0)
                .map((u) => (
                  <path key={u} d={`M${Math.floor(gx(u)) + 0.5} 232V952`} stroke="#d9d9d9" />
                ))}
              {hMinor
                .filter((u) => u % 10 === 0)
                .map((u) => (
                  <path key={u} d={`M287 ${Math.floor(gy(u)) + 0.5}H1653`} stroke="#d9d9d9" />
                ))}
              <path d="M1653.5 232V952" stroke="#d9d9d9" />
              <path d="M1707.5 232V952" stroke="#a9a9ad" />
            </g>
            {edges.map(([x1, y1, x2, y2], i) => (
              <line key={i} x1={x1} y1={y1} x2={x2} y2={y2} stroke="#1a1a1a" strokeWidth={x1 === x2 ? 1 : 0.95} />
            ))}
          </svg>
          {labels.map(([t, x, y], i) => (
            <div
              key={i}
              className={`absolute -translate-x-1/2 font-['Liberation_Sans'] text-[23px] leading-[26px] whitespace-nowrap text-[#141414] ${t.startsWith("<") ? "tracking-[-0.5px]" : "tracking-[-0.3px]"}`}
              style={{ left: x - X0, top: y - Y0 - 22 }}
            >
              {t}
            </div>
          ))}
          <div className="absolute top-[16px] right-[17px] flex h-[68px] w-[68px] items-center justify-center rounded-full bg-[#c8dbf3]">
            <div className="flex h-[45px] w-[45px] items-center justify-center rounded-full bg-white">
              <svg width="31" height="22" viewBox="0 0 31 22">
                <defs>
                  <linearGradient id="nPink" x1="0" y1="0" x2="0" y2="1">
                    <stop offset="0.15" stopColor="#ff2bc8" />
                    <stop offset="1" stopColor="#ffd0a6" />
                  </linearGradient>
                  <linearGradient id="nBlue" x1="0" y1="1" x2="1" y2="0">
                    <stop offset="0.4" stopColor="#41b0ff" />
                    <stop offset="1" stopColor="#4a78ff" />
                  </linearGradient>
                </defs>
                <path d="M14 0h4l9 21.5h-7z" fill="#1f28c8" />
                <path d="M22 21.5l4-6 1.5 6z" fill="#3a8cff" />
                <path d="M8 3q1.5-3 4-3h6l-7 18q-1.5 3.5-4 3.5H0.5z" fill="url(#nBlue)" />
                <path d="M20.5 3q1.5-3 4-3H31l-7.5 18q-1.5 3.5-4 3.5h-6z" fill="url(#nPink)" />
              </svg>
            </div>
          </div>
        </div>
      </div>
      <div className="h-[17px] border-t border-[#e6e6ea] bg-white pt-[2px]">
        <div className="ml-[343px] h-3 w-[1222px] rounded-full bg-[#d1d2d4]" />
      </div>
    </div>
  );
}

const swatches =
  "b10f1f cc0a2f fff f8647f f99bae 287f8f 38a8c1 40bfdc fff a4edff f45225 ff7d36 ff951a ffb615 ffc55e 13967e 17b69d 17cdb1 68d9c6 84eddb 9d2b61 c94f8d e764a9 f984c6 f2c3dd 5d8a14 75a326 96bf22 b1d147 d1e18a 1d25ab 323fd8 6e42f2 916ef9 ad92f8 fbca00 fbdd2d f0ea2a faf34c ffff80 9a4edc c250e6 d36ffa be84ff dba4ff 2f8045 3aa456 52ae78 65be88 8fd8a8 e9362b fe4a3b fb6266 ff7779 ff8f89 243da5 2c56d2 3069f3 648cff 88adf6 722c02 933603 a63e28 d05e3f e37757 168bdb 2b9cf8 46b1ff 3bcfff 68e5ff 764b33 955b42 b5704e d6845f f79a6c 8a7f76 b1ab9a cecab7 e5decd f4eddb 191919 2f2f2f 444444 595959 7b7b7b b9b9b9 c9c9c9 d8d8d8 e6e6e6 f3f3f3 fff".split(
    " ",
  );

function Palette() {
  return (
    <div className="flex h-[21px] items-center border-t border-l border-[#e6e6ea] bg-[#f9f9fb]">
      <div className="flex h-full w-[43px] shrink-0 items-center bg-white pl-[14px] text-[#444]">
        <Svg w={17} h={17} sw={1.6}>
          <path d="M5 0.5l9 8.5-5.5 5.5Q7.5 15.5 6.5 14.5L1.5 9 7 3.5" />
          <path d="M2 9h11.5L8 14.5z" fill="currentColor" stroke="none" />
          <path d="M15.5 12q1.5 2.5 0 4-1.5-1.5 0-4" fill="currentColor" strokeWidth="1" />
        </Svg>
        <Caret />
      </div>
      {swatches.map((c, i) => (
        <div key={i} className="w-[17.72px] shrink-0">
          <div className="h-[18px] w-4 rounded-[2px]" style={{ background: `#${c}` }} />
        </div>
      ))}
    </div>
  );
}

function Sep({ className = "" }: { className?: string }) {
  return <div className={`h-[27px] w-px shrink-0 bg-[#dcdde2] ${className}`} />;
}

function StatusBar() {
  return (
    <div className="flex h-10 items-center bg-[#f3f4fa] text-[14px] text-[#222]">
      <Cell className="w-[60px] pl-[23px]">
        <Svg w={22} h={13} sw={1.5}>
          <rect x="5" y="0.8" width="12" height="11.4" />
          <path d="M1 0v13M21 0v13" />
        </Svg>
      </Cell>
      <Sep />
      <Cell className="w-[138px] pl-5">
        <span className="pt-px tracking-[0.2px]">Page-1</span>
      </Cell>
      <Cell className="w-[21px]">
        <Caret />
      </Cell>
      <Sep />
      <Cell className="w-[50px] pl-[18px]">
        <Svg w={15} h={15} sw={1.6}>
          <path d="M7.5 0.5v14M0.5 7.5h14" />
        </Svg>
      </Cell>
      <Sep />
      <Cell className="w-[90px] pt-px pl-[21px] font-bold text-[#0a80ff]">
        <span className="tracking-[0.35px]">Page-1</span>
      </Cell>
      <Sep />
      <div className="w-[722px]" />
      <Sep />
      <Cell className="w-[254px] pl-[10px]">
        <div className="w-[235px]">
          <div className="mt-px flex h-[19px] justify-between leading-[19px]">
            <span>Number of shapes: 22/60</span>
            <span className="text-[#ff7a1a]">Buy Now</span>
          </div>
          <div className="mt-[3px] h-[4px] rounded-full bg-[#e1e2e6]">
            <div className="h-full w-[84px] rounded-l-full bg-[#0a80ff]" />
          </div>
        </div>
      </Cell>
      <Cell className="w-[25px]">
        <svg width="15" height="14" viewBox="0 0 15 14">
          <path d="M3 0.5h9l3 4L7.5 14 0 4.5z" fill="#ffc233" />
          <path d="M4.5 4.5l3 3.5 3-3.5" fill="none" stroke="#fff" strokeWidth="1.5" />
          <path d="M15 4.5L7.5 14V8z" fill="#ff9a2b" opacity="0.7" />
        </svg>
      </Cell>
      <Sep />
      <Cell className="w-[42px] pl-[14px] text-[#444]">
        <Svg w={22} h={20} sw={1.5}>
          <path d="M11 1l10 6.5L11 14 1 7.5zM1 11.8L11 18.5l10-6.7" strokeLinejoin="round" />
        </Svg>
      </Cell>
      <Cell className="w-[26px]">
        <Caret className="text-[#888]" />
      </Cell>
      <Cell className="w-[29px] text-[#444]">
        <Svg w={18} h={18} sw={1.6}>
          <path d="M5 1H1v4M13 1h4v4M5 17H1v-4M13 17h4v-4M6 5h3.5a3 3 0 0 1 3 3v2a3 3 0 0 1-3 3H6z" />
        </Svg>
      </Cell>
      <Cell className="w-[53px] pt-px">Focus</Cell>
      <Cell className="w-[34px] text-[#444]">
        <Svg w={20} h={20} sw={1.5} className="-ml-px">
          <circle cx="10" cy="10" r="9" />
          <path d="M7.5 6v8l5.5-4z" />
        </Svg>
      </Cell>
      <Sep />
      <Cell className="w-10 pl-3">
        <div className="h-[1.5px] w-[14px] bg-[#444]" />
      </Cell>
      <Cell className="w-[133px]">
        <div className="h-[3px] w-[29px] rounded-l bg-[#444]" />
        <div className="h-[14px] w-[14px] rounded-full border-2 border-[#444] bg-white" />
        <div className="h-[3px] w-[77px] bg-white" />
      </Cell>
      <Cell className="w-[32px]">
        <Svg w={15} h={15} sw={1.5}>
          <path d="M7.5 0.5v14M0.5 7.5h14" />
        </Svg>
      </Cell>
      <Cell className="w-[42px] pt-px tracking-[-0.1px]">115%</Cell>
      <Cell className="w-[21px]">
        <Caret className="text-[#999]" />
      </Cell>
      <Sep />
      <Cell className="w-14 pl-4 text-[#444]">
        <Svg w={18} h={18} sw={1.7}>
          <path d="M5.5 1H1v4.5M12.5 1H17v4.5M5.5 17H1v-4.5M12.5 17H17v-4.5M5 6h8v6H5z" />
        </Svg>
      </Cell>
      <Cell className="text-[#444]">
        <Svg w={18} h={18} sw={1.5}>
          <rect x="0.8" y="0.8" width="16.4" height="16.4" rx="1" />
          <path d="M3 9h12M5.5 6.5L3 9l2.5 2.5M12.5 6.5L15 9l-2.5 2.5" />
        </Svg>
      </Cell>
    </div>
  );
}

const FirefoxIcon = (
  <svg width="30" height="30" viewBox="0 0 30 30">
    <defs>
      <linearGradient id="ff" x1="0.8" y1="0" x2="0.3" y2="1">
        <stop offset="0" stopColor="#fff24f" />
        <stop offset="0.45" stopColor="#ff980e" />
        <stop offset="0.75" stopColor="#ff3750" />
        <stop offset="1" stopColor="#e31587" />
      </linearGradient>
    </defs>
    <path d="M18 0q2 3 5 5 6 5 6 12a14 12.5 0 0 1-28 0Q1 11 4 7l1 3 2-5q1 2 3 3 5-1 6 0-1-4 2-8z" fill="url(#ff)" />
    <circle cx="15" cy="15.5" r="6" fill="#7542e5" />
    <path d="M7 9q4-1 6 1l4 1q-1 2-4 2.5-1 2 1 3.5-3 1-5-1-3-3-2-7z" fill="#ff9a1f" />
  </svg>
);
const ExplorerIcon = (
  <svg width="30" height="30" viewBox="0 0 30 30">
    <path d="M1 3h10l2 3h15v5H1z" fill="#e8a317" />
    <path d="M1 7h28v19H1z" fill="#ffd869" />
    <path d="M6 26V17q0-2 2-2h14q2 0 2 2v9h-4.5v-6h-9v6z" fill="#3f9be0" />
  </svg>
);
const VsIcon = (
  <svg width="30" height="30" viewBox="0 0 30 30">
    <path d="M0 8v14l3.5 2.5V5.5z" fill="#6a3fae" />
    <path d="M3 5.5L21 22v8L3 12z" fill="#7f50c4" />
    <path d="M3 24.5L21 8V0L3 18z" fill="#a37be0" />
    <path d="M21 0l9 3.5v23L21 30z" fill="#c594f7" />
  </svg>
);
const SqlIcon = (
  <svg width="30" height="30" viewBox="0 0 30 30">
    <path d="M3 4v13q0 3 7 3t7-3V4z" fill="#fccf1a" />
    <ellipse cx="10" cy="4" rx="7" ry="3.2" fill="#f6b26b" />
    <path d="M20 2.5h6.5V9M1 21v7h7" fill="none" stroke="#4b9b4b" strokeWidth="2.6" />
    <path d="M13 17l11 10M23 16L13 27" stroke="#2e79b8" strokeWidth="2.8" />
    <path d="M11 16l4-2 3 3-4 3zM21 13l5 0v5z" fill="#2e79b8" />
  </svg>
);
const EdgeIcon = (
  <svg width="30" height="30" viewBox="0 0 30 30">
    <defs>
      <linearGradient id="eg1" x1="0" y1="0.3" x2="1" y2="0.5">
        <stop offset="0" stopColor="#2fb4e8" />
        <stop offset="0.5" stopColor="#36c9c6" />
        <stop offset="1" stopColor="#65e24e" />
      </linearGradient>
      <linearGradient id="eg2" x1="0" y1="0" x2="1" y2="1">
        <stop offset="0" stopColor="#1f95dd" />
        <stop offset="1" stopColor="#0b4a98" />
      </linearGradient>
    </defs>
    <circle cx="15" cy="15" r="15" fill="url(#eg2)" />
    <path d="M0 13A15 15 0 0 1 30 14q0 6-7 6.5-5 0-5.5-2.5 1-1 1-3-1-5-8-6Q3 8.5 0 13z" fill="url(#eg1)" />
    <path d="M28 22q-5 2.5-10 1-5-2-5.5-7 0-2.5 2-4.5-6 1-6.5 8 1 9 9 10.2Q24 28 28 22z" fill="#1363b4" />
    <path d="M17.5 17q1.5-1 1-3-1-2-3.5-1.5-2.5 2-2 4.5 1 4.5 6 5.7 5 0.5 9-1.5l1-1.5q-3 1.3-6 0.8-4.5-0.5-5.5-3.5z" fill="#43403c" />
  </svg>
);
const CodeIcon = (
  <svg width="30" height="30" viewBox="0 0 30 30">
    <path d="M0 10l2.5-2L22 24v6L1 11.5zM0 20l2.5 2.5L22 6V0L1 18.5z" fill="#0f85cf" />
    <path d="M21 0l8 3.5v23L21 30z" fill="#2ca5ee" />
  </svg>
);
const ChromeIcon = (
  <svg width="30" height="30" viewBox="0 0 30 30">
    <circle cx="15" cy="15" r="15" fill="#2e9e48" />
    <path d="M15 15L2 7.5A15 15 0 0 1 28 7.5H15z" fill="#e33b2e" />
    <path d="M15 7.5h13A15 15 0 0 1 15 30l6.5-11.3z" fill="#fbc116" />
    <circle cx="15" cy="15" r="7.2" fill="#fff" />
    <circle cx="15" cy="15" r="5.7" fill="#2a75e8" />
  </svg>
);
const TelegramIcon = (
  <svg width="30" height="30" viewBox="0 0 30 30">
    <circle cx="14" cy="14.5" r="13.5" fill="#2c9fd9" />
    <path d="M5 14.5L21.5 8l-2.5 13-5-3.5-2.5 2.5-0.5-4z" fill="#fff" />
    <rect x="12" y="18" width="18" height="12" rx="3" fill="#3c4868" />
    <text x="29" y="28.5" textAnchor="end" fontSize="11" fill="#fff" fontFamily="Open Sans" letterSpacing="-0.3">
      ..98
    </text>
  </svg>
);
const RarIcon = (
  <svg width="30" height="30" viewBox="0 0 30 30">
    <rect x="0" y="2" width="30" height="8" rx="1" fill="#c4224a" />
    <rect x="0" y="11" width="30" height="8" rx="1" fill="#3b3fb5" />
    <rect x="0" y="20" width="30" height="7" rx="1" fill="#16913b" />
    <path d="M0 9.5h30M0 18.5h30" stroke="#1d1d2a" strokeWidth="1.5" />
    <path d="M3.5 3v6M3.5 12v6M3.5 21v5" stroke="#e8c23a" strokeWidth="1.5" />
    <rect x="11" y="1" width="8" height="27" fill="#c8862c" />
    <rect x="11" y="1" width="8" height="9" fill="#e8b83a" />
    <rect x="10.5" y="12.5" width="9" height="6" fill="#8a4b1c" stroke="#eee" strokeWidth="1.2" />
  </svg>
);

const apps: { icon: React.ReactNode; state: "none" | "open" | "multi" | "active" }[] = [
  { icon: FirefoxIcon, state: "open" },
  { icon: ExplorerIcon, state: "open" },
  { icon: VsIcon, state: "none" },
  { icon: SqlIcon, state: "none" },
  { icon: EdgeIcon, state: "open" },
  { icon: CodeIcon, state: "open" },
  { icon: ChromeIcon, state: "multi" },
  { icon: TelegramIcon, state: "open" },
  { icon: RarIcon, state: "open" },
  { icon: <EdrawLogo id="lg2" />, state: "active" },
];

function Taskbar() {
  return (
    <div className="flex h-[50px] bg-[linear-gradient(90deg,#413e39_0%,#454240_30%,#3a3831_50%,#3d3a32_75%,#383732_85%,#1f2324_92%,#1c2021_100%)] text-white">
      <Cell className="w-[60px] pl-5">
        <svg width="20" height="20" viewBox="0 0 20 20" fill="#fff">
          <path d="M0 3l8.5-1.2V9.5H0zM9.5 1.6L20 0v9.5H9.5zM0 10.5h8.5v7.7L0 17zM9.5 10.5H20V20L9.5 18.4z" />
        </svg>
      </Cell>
      <Cell className="w-[63px] pl-5">
        <Svg w={21} h={21} sw={1.5}>
          <circle cx="13" cy="7.5" r="6.6" />
          <path d="M8.2 12.3L0.7 20" />
        </Svg>
      </Cell>
      {apps.map((a, i) => (
        <div key={i} className={`flex h-full w-[62px] shrink-0 flex-col items-center pt-[10px] ${a.state === "active" ? "bg-[#69665f]" : ""}`}>
          {a.icon}
          {a.state === "open" && <div className="mt-[7px] h-[3px] w-[51px] bg-[#76b9ed]" />}
          {a.state === "multi" && (
            <div className="mt-[7px] flex h-[3px] w-[51px]">
              <div className="w-10 bg-[#76b9ed]" />
              <div className="ml-px flex-1 bg-[#5b8ab0]" />
            </div>
          )}
          {a.state === "active" && <div className="mt-[7px] h-[3px] w-full bg-[#76b9ed]" />}
        </div>
      ))}
      <Cell className="ml-[809px] w-7">
        <Svg w={16} h={9} sw={1.5}>
          <path d="M1 8l7-7 7 7" />
        </Svg>
      </Cell>
      <Cell className="w-[33px]">
        <svg width="21" height="14" viewBox="0 0 21 14">
          <path d="M4 13a4 4 0 0 1 0-7.5Q6 0.5 10.5 0.8q4 0 5.5 4.2 4.5 0.5 4.5 4t-4 4z" fill="#aaa" />
          <path d="M6 13l-3-3Q8 3 12 8q2-3 4-2.5 4.5 0.5 4.5 3.5t-4 4z" fill="#fff" />
        </svg>
      </Cell>
      <Cell className="w-7">
        <svg width="13" height="20" viewBox="0 0 13 20">
          <rect x="2.5" y="0" width="8" height="14" rx="1.5" fill="#fff" />
          <path d="M0.6 10.5v2.5q0 3.5 3.5 3.5h5q3.5 0 3.5-3.5v-2.5M6.5 16.5v2.8M3 19.3h7" fill="none" stroke="#fff" strokeWidth="1.2" />
        </svg>
      </Cell>
      <Cell className="w-[29px]">
        <svg width="19" height="12" viewBox="0 0 19 12">
          <path d="M0.6 0.6h16.5v10.8H0.6z" fill="none" stroke="#fff" strokeWidth="1.2" />
          <path d="M2.5 2.5h3.5v7H2.5zM17.5 3.5H19v5h-1.5z" fill="#fff" />
        </svg>
      </Cell>
      <Cell className="w-[33px]">
        <Svg w={21} h={16} sw={1.2}>
          <path d="M1 5.5h2.5L7 1.5v13L3.5 10.5H1zM9.5 5.5q2 2.5 0 5M12.5 3.5q3.5 4.5 0 9" />
          <path d="M15.5 1.5q6 6.5 0 13" opacity="0.5" />
        </Svg>
      </Cell>
      <Cell className="w-[30px] pt-1">
        <Svg w={16} h={16} sw={1.4}>
          <path d="M1 15Q1 1 15 1" opacity="0.5" />
          <path d="M4.5 15Q4.5 5 15 5M8 15Q8 9 15 9" />
          <circle cx="13.5" cy="14" r="1.5" fill="currentColor" stroke="none" />
        </Svg>
      </Cell>
      <Cell className="w-[38px] pt-0.5 text-[14.6px] tracking-[-0.1px]">ENG</Cell>
      <div className="flex w-[82px] flex-col items-center pt-[2px] text-[14px] leading-[23px]">
        <span className="tracking-[-0.1px]">4:10 PM</span>
        <span className="tracking-[-0.1px]">11/23/2023</span>
      </div>
      <div className="relative ml-[16px] h-full w-[45px] pt-[15px]">
        <svg width="20" height="20" viewBox="0 0 20 20">
          <path d="M0 0h20v16H10l-4 4v-4H0z" fill="#fff" />
          <path d="M4 4.5h12M4 8.5h12M4 12.5h8" stroke="#222" strokeWidth="1.2" />
        </svg>
        <div className="absolute top-[24px] left-[9px] flex h-[21px] w-[21px] items-center justify-center rounded-full border border-[#888] bg-[#2b2e2f]/90 text-[14px]">1</div>
      </div>
      <div className="h-full w-px bg-[#777]" />
    </div>
  );
}

export default function App() {
  return (
    <div className="relative h-[1080px] w-[1920px] overflow-hidden bg-white font-['Open_Sans','Noto_Sans',sans-serif] leading-tight">
      <TitleBar />
      <MenuBar />
      <Ribbon />
      <div className="flex h-[780px]">
        <SymbolsPanel />
        <div className="flex w-[1656px] flex-col">
          <div className="flex h-[759px]">
            <Canvas />
            <div className="flex w-[17px] flex-col border-l border-[#f0f0f3]">
              <div className="h-[742px] bg-white pt-[169px]">
                <div className="ml-[2px] h-[319px] w-3 rounded-full bg-[#d1d2d4]" />
              </div>
              <div className="h-[17px] bg-[#ebebf1]" />
            </div>
          </div>
          <Palette />
        </div>
      </div>
      <StatusBar />
      <Taskbar />
      <div className="absolute top-[890px] left-0 flex h-[53px] w-[314px] items-center bg-white/95 text-[14px] shadow-[0_1px_4px_rgba(0,0,0,0.35)]">
        <div className="flex w-[116px] justify-end whitespace-nowrap text-[#222]">aring your screen.</div>
        <div className="ml-[13px] flex h-10 w-[127px] items-center justify-center rounded bg-[#2076eb] font-bold tracking-[-0.2px] text-white">Stop sharing</div>
        <span className="ml-[12px] tracking-[0.1px] text-[#1a6fe0] underline">Hide</span>
      </div>
    </div>
  );
}
